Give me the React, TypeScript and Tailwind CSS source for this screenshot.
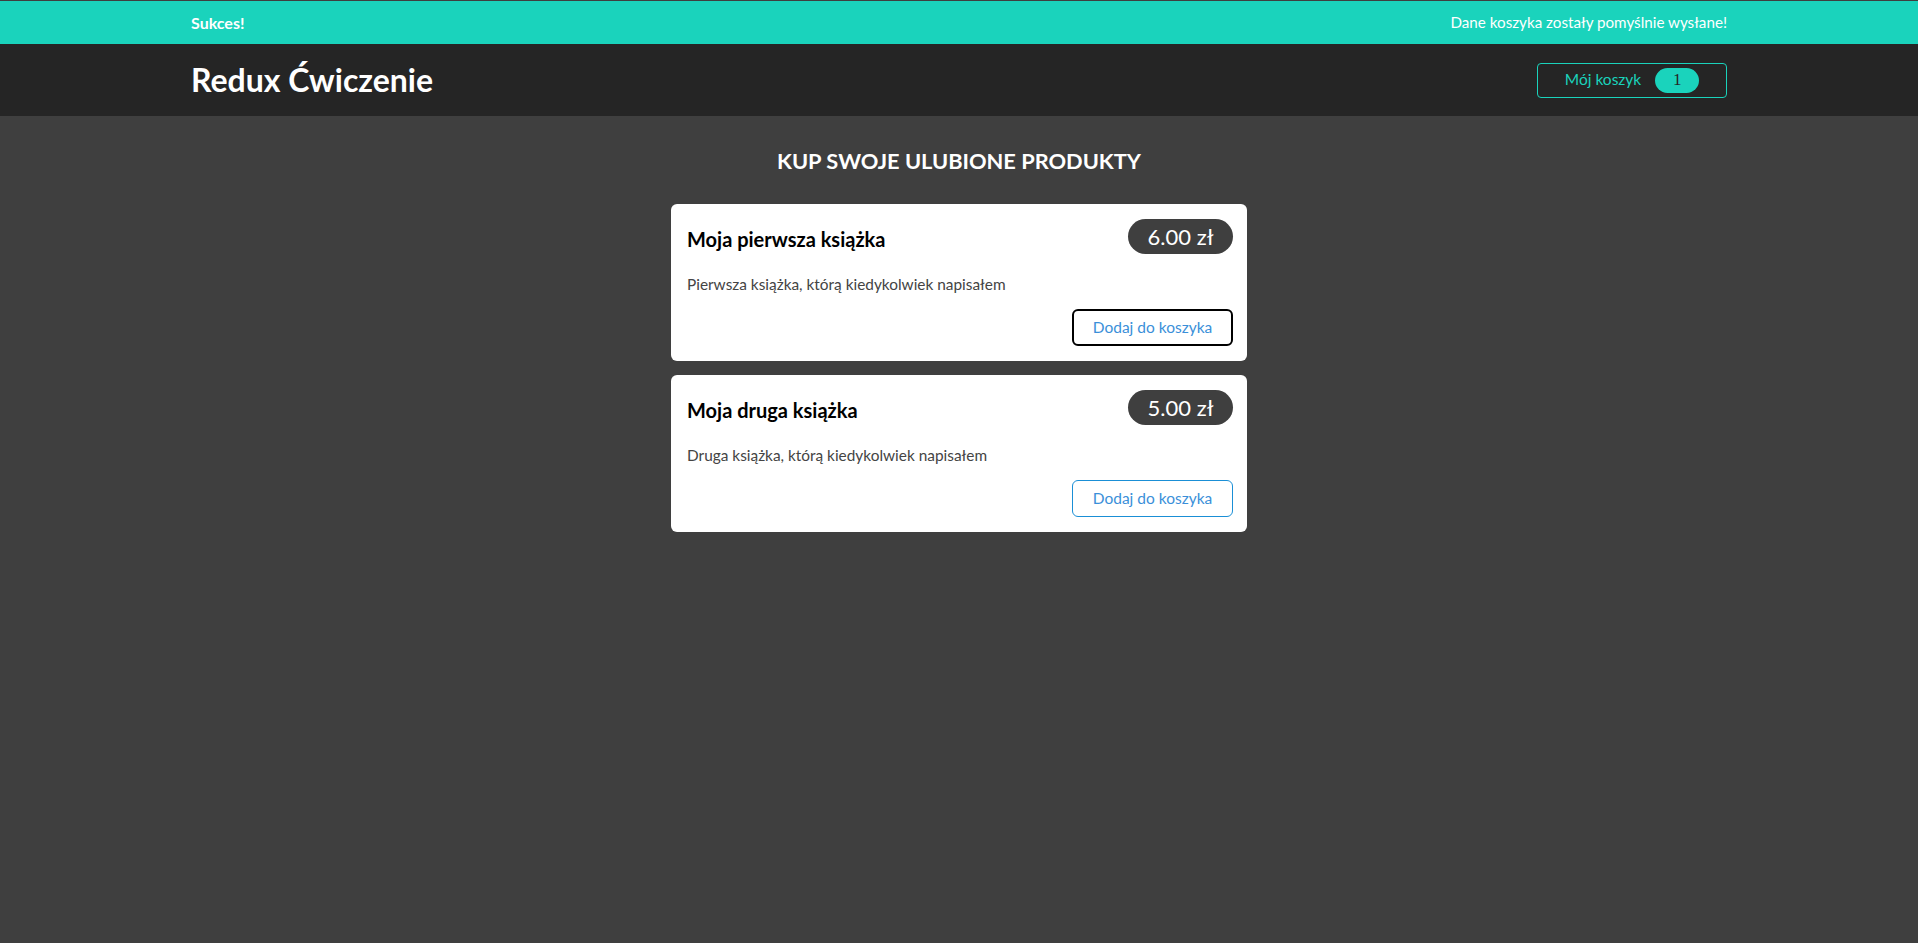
import React from "react";

const products = [
  { id: 1, title: "Moja pierwsza książka", price: "6.00 zł", desc: "Pierwsza książka, którą kiedykolwiek napisałem", focused: true },
  { id: 2, title: "Moja druga książka", price: "5.00 zł", desc: "Druga książka, którą kiedykolwiek napisałem", focused: false },
];

export default function App() {
  return (
    <div className="min-h-[943px] bg-[#3f3f3f] pt-px" style={{ fontFamily: "Lato, 'Noto Sans', sans-serif" }}>
      <div className="h-[43px] bg-[#1ad3bc] text-white">
        <div className="mx-auto flex h-full max-w-[1536px] items-center justify-between">
          <span className="text-[16px] font-bold">Sukces!</span>
          <span className="text-[15.2px]">Dane koszyka zostały pomyślnie wysłane!</span>
        </div>
      </div>
      <header className="h-[72px] bg-[#252525]">
        <div className="mx-auto flex h-full max-w-[1536px] items-center justify-between">
          <h1 className="text-[32px] font-bold text-white">Redux Ćwiczenie</h1>
          <button className="flex h-[35px] w-[190px] items-center justify-center gap-[14px] rounded-[4px] border border-[#1ad3bc] text-[15.5px] text-[#1ad3bc]">
            <span>Mój koszyk</span>
            <span className="flex h-[25px] w-[44px] items-center justify-center rounded-full bg-[#1ad3bc] text-[17px] text-[#252525] [font-family:'Liberation_Serif',serif]">1</span>
          </button>
        </div>
      </header>
      <main className="mx-auto w-[576px] pt-[30px]">
        <h2 className="text-center text-[21.8px] font-bold uppercase leading-[30px] text-white">Kup swoje ulubione produkty</h2>
        <ul className="mt-[28px] flex flex-col gap-[14px]">
          {products.map((p) => (
            <li key={p.id} className="h-[157px] rounded-[6px] bg-white pl-[16px] pr-[14px] pt-[15px]">
              <div className="flex items-center justify-between">
                <h3 className="mt-[4px] text-[20px] font-bold text-black">{p.title}</h3>
                <span className="flex h-[35px] w-[105px] items-center justify-center rounded-full bg-[#3f3f3f] text-[22px] text-white">{p.price}</span>
              </div>
              <p className="mt-[19px] text-[15.4px] leading-[23px] text-[#444444]">{p.desc}</p>
              <div className="mt-[13px] flex justify-end">
                <button
                  className={
                    p.focused
                      ? "h-[37px] w-[161px] rounded-[6px] border-2 border-black text-[15.5px] text-[#3a8fd9]"
                      : "h-[37px] w-[161px] rounded-[6px] border border-[#1a8fd6] text-[15.5px] text-[#3a8fd9]"
                  }
                >
                  Dodaj do koszyka
                </button>
              </div>
            </li>
          ))}
        </ul>
      </main>
    </div>
  );
}
